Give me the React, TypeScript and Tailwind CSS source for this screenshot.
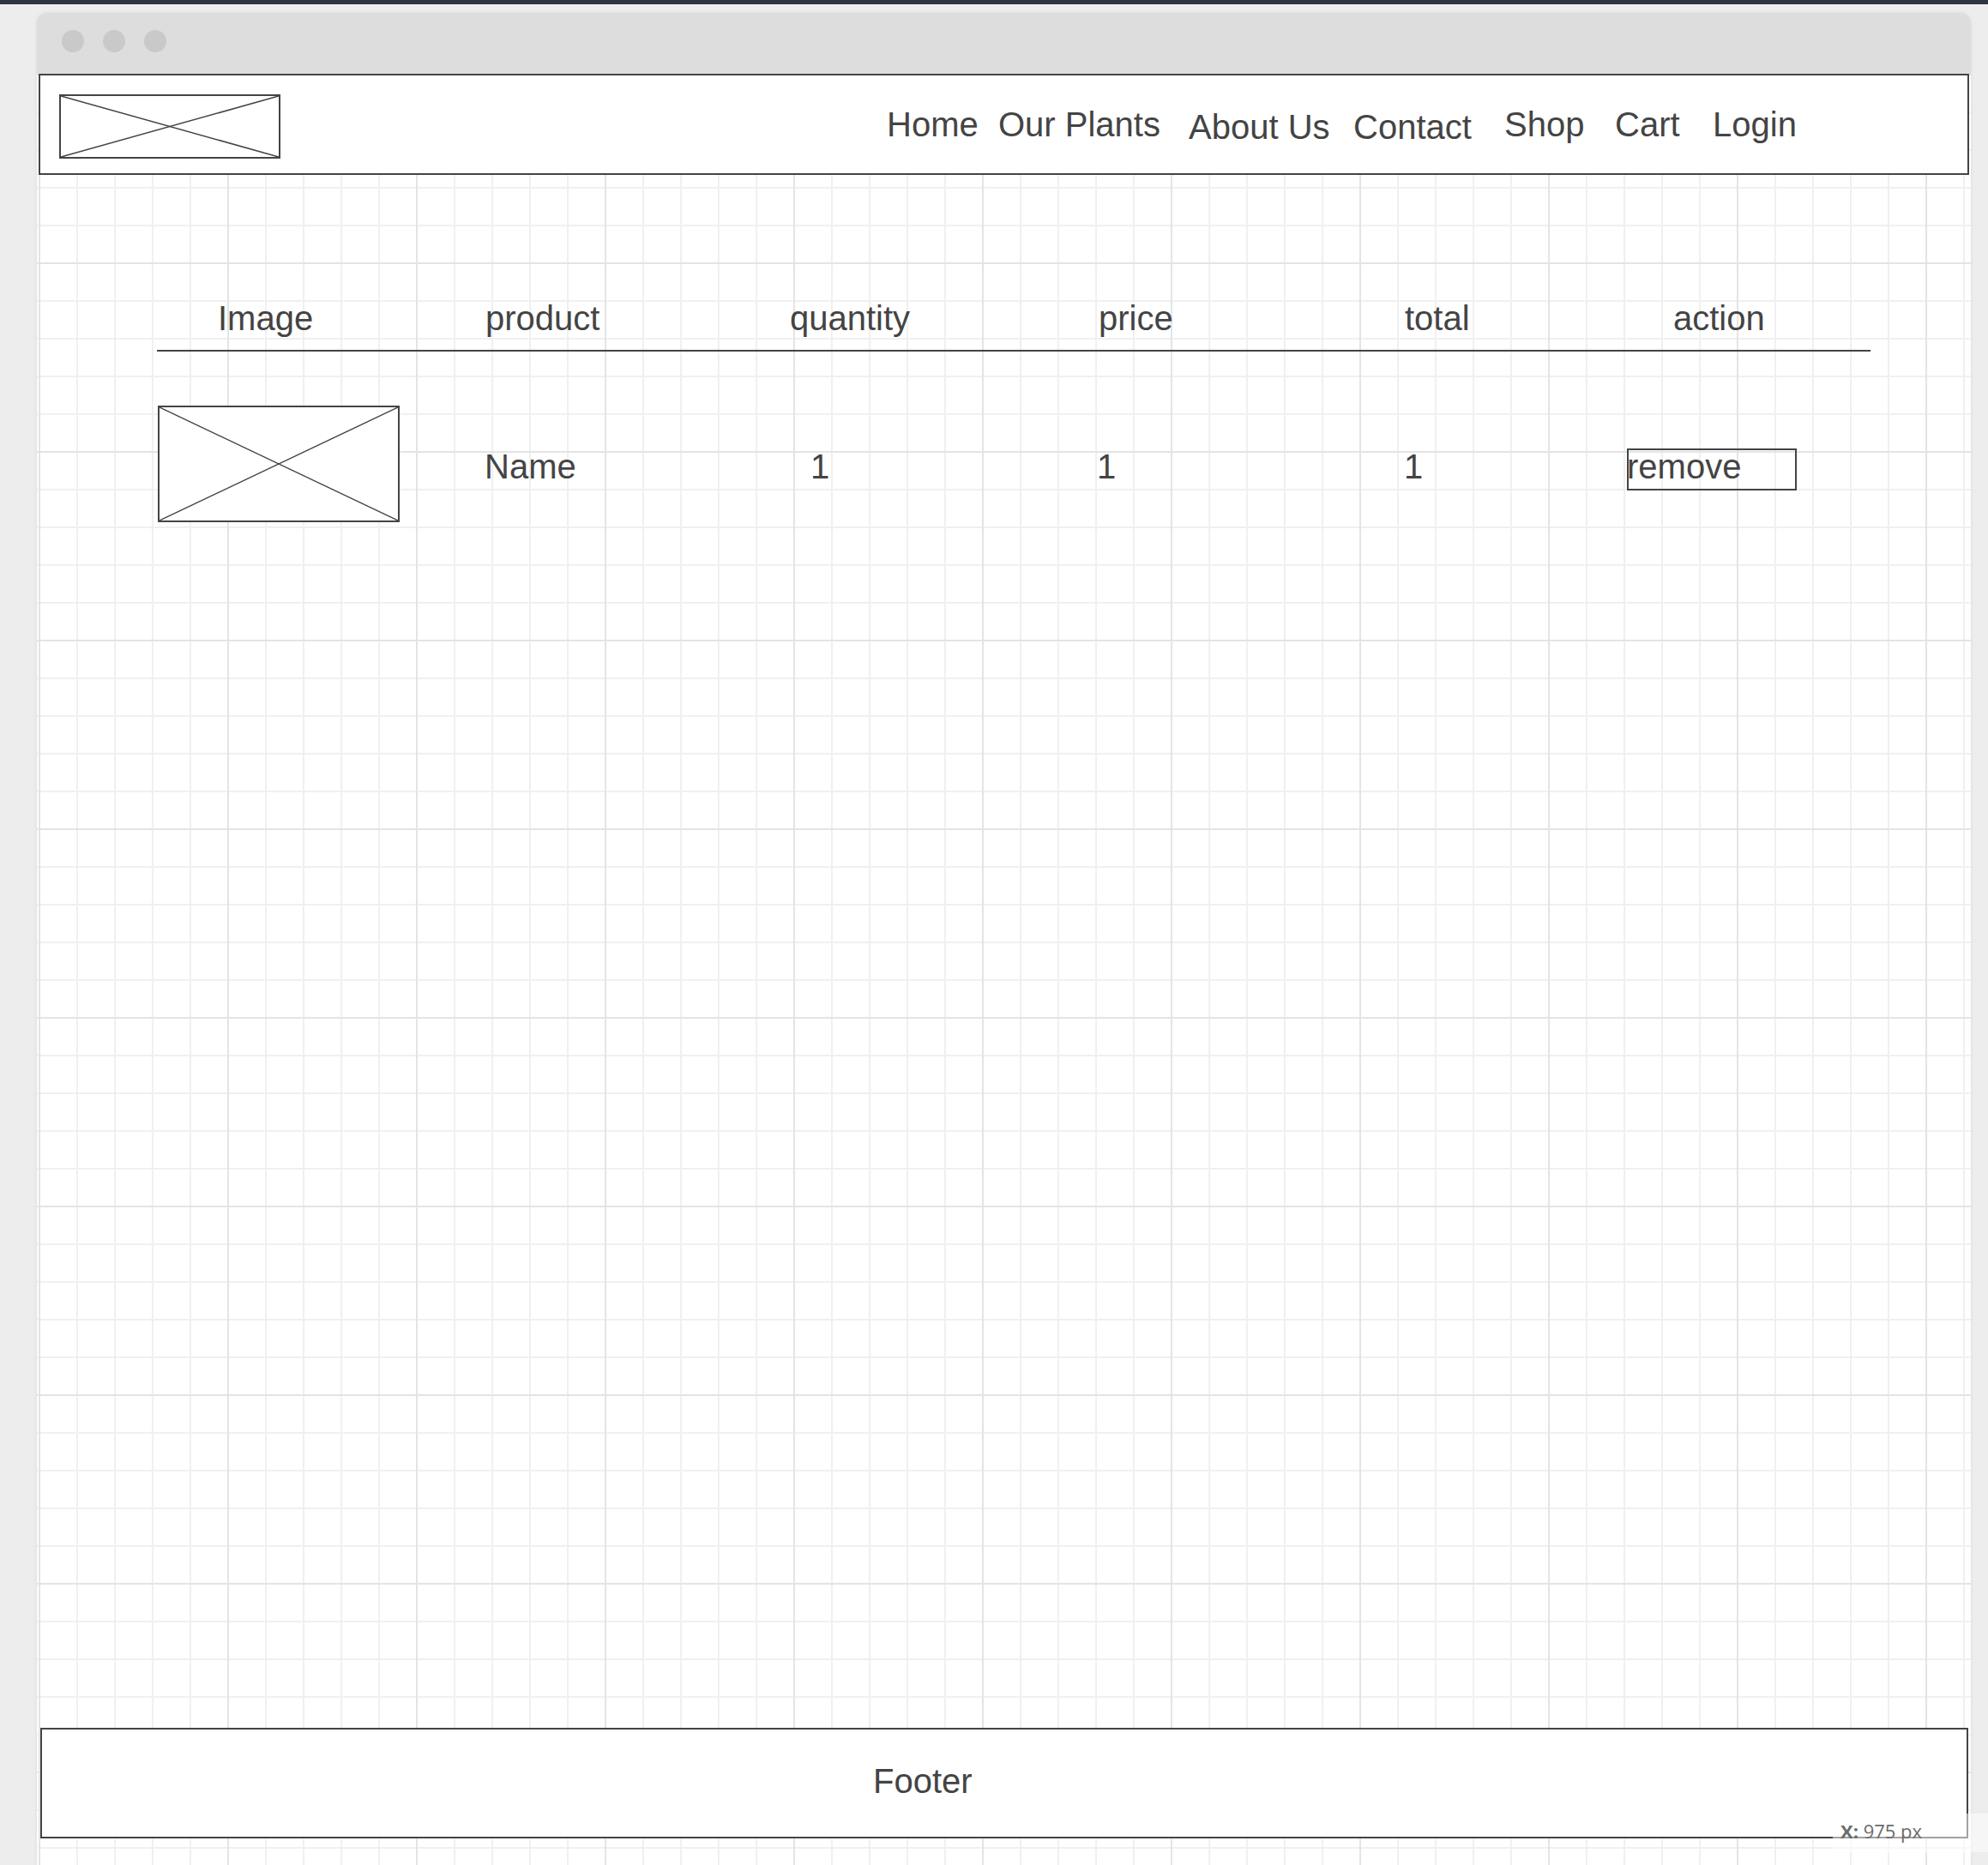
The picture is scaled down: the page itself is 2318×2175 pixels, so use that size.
import React from "react";

function XBox({ className, stroke = 1.5 }: { className: string; stroke?: number }) {
  return (
    <div className={"border-2 border-[#444444] bg-white " + className}>
      <svg className="block w-full h-full" viewBox="0 0 100 100" preserveAspectRatio="none">
        <line x1="0" y1="0" x2="100" y2="100" stroke="#444444" strokeWidth={stroke} vectorEffect="non-scaling-stroke" />
        <line x1="100" y1="0" x2="0" y2="100" stroke="#444444" strokeWidth={stroke} vectorEffect="non-scaling-stroke" />
      </svg>
    </div>
  );
}

export default function App() {
  return (
    <div className="relative w-[2318px] h-[2175px] overflow-hidden bg-[#ededed] font-['Liberation_Sans',Arial,sans-serif] text-[#444444]">
      <div className="h-[5px] bg-[#2e3440]" />
      <div className="ml-[43px] mt-[10px] w-[2255px] h-[2170px] flex flex-col rounded-t-[12px] overflow-hidden shadow-[0_0_4px_rgba(0,0,0,0.08)]">
        {/* title bar */}
        <div className="h-[71px] shrink-0 bg-[#dddddd] flex items-start pt-[20px] pl-[29px] gap-[22px]">
          <div className="w-[26px] h-[26px] rounded-full bg-[#c9c9c9]" />
          <div className="w-[26px] h-[26px] rounded-full bg-[#c9c9c9]" />
          <div className="w-[26px] h-[26px] rounded-full bg-[#c9c9c9]" />
        </div>
        {/* canvas */}
        <div className="flex-1 flex flex-col bg-white bg-[linear-gradient(to_right,#e4e4e4_2px,transparent_2px),linear-gradient(to_bottom,#e4e4e4_2px,transparent_2px),linear-gradient(to_right,#f0f0f0_2px,transparent_2px),linear-gradient(to_bottom,#f0f0f0_2px,transparent_2px)] bg-[size:220px_220px,220px_220px,44px_44px,44px_44px] bg-[position:2px_0]">
          {/* header */}
          <div className="ml-[2px] w-[2251px] h-[118px] shrink-0 border-2 border-[#444444] bg-white flex items-start text-[40px] leading-[45px] whitespace-nowrap">
            <XBox className="ml-[22px] mt-[22px] w-[258px] h-[75px] shrink-0" stroke={1.6} />
            <div className="ml-[707px] mt-[35px] w-[130px]">Home</div>
            <div className="mt-[35px] w-[222px]">Our Plants</div>
            <div className="mt-[38px] w-[192px]">About Us</div>
            <div className="mt-[38px] w-[176px]">Contact</div>
            <div className="mt-[35px] w-[129px]">Shop</div>
            <div className="mt-[35px] w-[114px]">Cart</div>
            <div className="mt-[35px]">Login</div>
          </div>
          {/* main */}
          <div className="h-[1811px] shrink-0 flex flex-col text-[40px] leading-[45px] whitespace-nowrap">
            <div className="mt-[145px] ml-[211px] flex">
              <div className="w-[312px]">Image</div>
              <div className="w-[355px]">product</div>
              <div className="w-[360px]">quantity</div>
              <div className="w-[357px]">price</div>
              <div className="w-[313px]">total</div>
              <div>action</div>
            </div>
            <div className="mt-[14px] ml-[140px] w-[1998px] h-[2px] bg-[#444444]" />
            <div className="mt-[63px] ml-[141px] flex items-start">
              <XBox className="w-[282px] h-[136px] shrink-0" stroke={1.4} />
              <div className="ml-[99px] mt-[49px] w-[380px]">Name</div>
              <div className="mt-[49px] w-[334px]">1</div>
              <div className="mt-[49px] w-[358px]">1</div>
              <div className="mt-[49px] w-[260px]">1</div>
              <div className="mt-[50px] w-[198px] h-[49px] border-2 border-[#444444] flex items-start">
                <span className="-ml-[2px] -mt-[3px]">remove</span>
              </div>
            </div>
          </div>
          {/* footer */}
          <div className="ml-[4px] w-[2248px] h-[129px] shrink-0 border-2 border-[#444444] bg-white text-[40px] leading-[45px]">
            <div className="ml-[969px] mt-[38px]">Footer</div>
          </div>
        </div>
      </div>
      {/* coordinate tooltip */}
      <div className="absolute left-[2137px] top-[2115px] w-[181px] h-[45px] bg-white/50 pl-[9px] pt-[5px] font-['Open_Sans',sans-serif] text-[22px] leading-[30px] text-[#6b6b6b] whitespace-nowrap">
        <span className="font-bold">X:</span> 975 px
      </div>
    </div>
  );
}
